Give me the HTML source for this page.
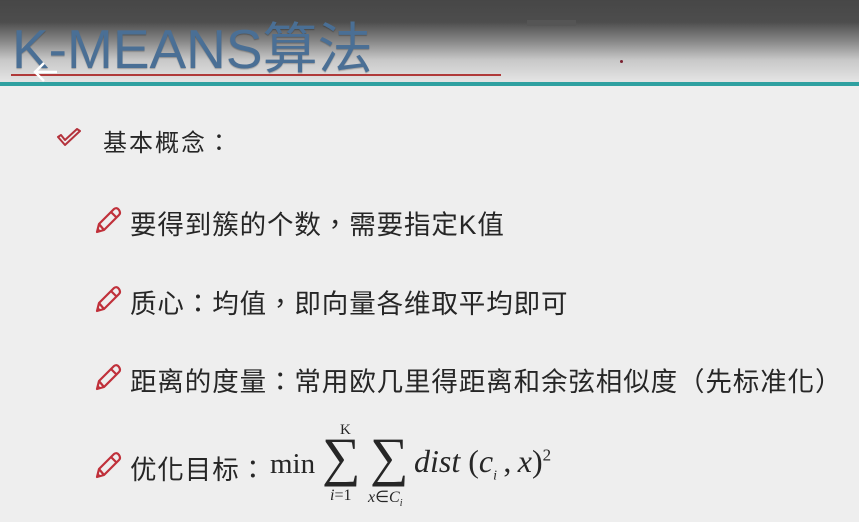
<!DOCTYPE html>
<html><head><meta charset="utf-8"><style>
html,body{margin:0;padding:0}
body{width:859px;height:522px;overflow:hidden;position:relative;background:#eeeeee;font-family:"Liberation Sans","Noto Sans CJK TC",sans-serif;color:#2a2a2a}
.top{position:absolute;left:0;top:0;width:859px;height:82px;background:linear-gradient(#474747 0px,#4d4d4d 22px,#8a8a8a 42px,#c8c8c8 60px,#e2e2e2 80px)}
.title{position:absolute;left:12px;top:4px;font-size:55px;color:#4a6f95;font-family:"Liberation Sans","Noto Sans CJK SC",sans-serif;white-space:nowrap;text-shadow:0 1px 1px rgba(0,0,0,.25)}
.red{position:absolute;left:11px;top:74px;width:490px;height:2px;background:#b03a3a}
.teal{position:absolute;left:0;top:82px;width:859px;height:4px;background:#2fa0a0}
.dash{position:absolute;left:527px;top:20px;width:49px;height:6px;background:#555}
.dot{position:absolute;left:620px;top:60px;width:3px;height:3px;border-radius:2px;background:#7a2030}
.t{position:absolute;white-space:nowrap;font-size:26.5px;letter-spacing:0.9px;font-family:"Liberation Sans","Noto Sans CJK TC",sans-serif;color:#262626}
.ic{position:absolute}
.m{font-family:"Liberation Serif",serif}
</style></head><body>
<div class="top"></div>
<div class="title">K-MEANS算法</div>
<div class="dash"></div>
<div class="dot"></div>
<div class="red"></div>
<div class="teal"></div>
<svg class="ic" style="left:30px;top:60px" width="30" height="26" viewBox="0 0 30 26"><path d="M27 12H6M14 3L5 12L14 21" stroke="#fff" stroke-width="2.5" fill="none"/></svg>

<svg class="ic" style="left:56px;top:128px" width="26" height="20" viewBox="0 0 26 20"><path d="M2 9L9 17L24 3L21 1L9 12L5 7Z" fill="none" stroke="#b4323c" stroke-width="2" stroke-linejoin="round"/></svg>
<div class="t" style="left:103px;top:123px;font-size:24px;letter-spacing:2px">基本概念：</div>

<svg class="ic" style="left:93px;top:205px;" width="30" height="30" viewBox="0 0 30 30"><g fill="none" stroke="#c0303a" stroke-width="2.2" stroke-linejoin="round"><path d="M4 27L6 19L21 4Q24 2 26 5Q28 8 26 10L11 25Z"/><path d="M6 19L11 25M18 7L23 12"/></g><path d="M4 27L5 23L8 26Z" fill="#c0303a"/></svg>
<div class="t" style="left:130px;top:203px">要得到簇的个数，需要指定K值</div>

<svg class="ic" style="left:93px;top:284px;" width="30" height="30" viewBox="0 0 30 30"><g fill="none" stroke="#c0303a" stroke-width="2.2" stroke-linejoin="round"><path d="M4 27L6 19L21 4Q24 2 26 5Q28 8 26 10L11 25Z"/><path d="M6 19L11 25M18 7L23 12"/></g><path d="M4 27L5 23L8 26Z" fill="#c0303a"/></svg>
<div class="t" style="left:130px;top:282px">质心：均值，即向量各维取平均即可</div>

<svg class="ic" style="left:93px;top:362px;" width="30" height="30" viewBox="0 0 30 30"><g fill="none" stroke="#c0303a" stroke-width="2.2" stroke-linejoin="round"><path d="M4 27L6 19L21 4Q24 2 26 5Q28 8 26 10L11 25Z"/><path d="M6 19L11 25M18 7L23 12"/></g><path d="M4 27L5 23L8 26Z" fill="#c0303a"/></svg>
<div class="t" style="left:130px;top:360px">距离的度量：常用欧几里得距离和余弦相似度（先标准化）</div>

<svg class="ic" style="left:93px;top:450px;" width="30" height="30" viewBox="0 0 30 30"><g fill="none" stroke="#c0303a" stroke-width="2.2" stroke-linejoin="round"><path d="M4 27L6 19L21 4Q24 2 26 5Q28 8 26 10L11 25Z"/><path d="M6 19L11 25M18 7L23 12"/></g><path d="M4 27L5 23L8 26Z" fill="#c0303a"/></svg>
<div class="t" style="left:130px;top:448px">优化目标：</div>

<div class="t m" style="left:270px;top:448px;font-size:29px;letter-spacing:0">min</div>
<div class="t m" style="left:322px;top:430px;font-size:54px;letter-spacing:0;line-height:54px">∑</div>
<div class="t m" style="left:340px;top:422px;font-size:15px;letter-spacing:0">K</div>
<div class="t m" style="left:330px;top:487px;font-size:16px;letter-spacing:0"><i>i</i>=1</div>
<div class="t m" style="left:370px;top:430px;font-size:54px;letter-spacing:0;line-height:54px">∑</div>
<div class="t m" style="left:368px;top:487px;font-size:16px;letter-spacing:0"><i>x</i>∈<i>C<sub style="font-size:10px">i</sub></i></div>
<div class="t m" style="left:414px;top:443px;font-size:32px;letter-spacing:0"><i>dist</i>&nbsp;(<i>c<sub style="font-size:14px">i</sub></i>&thinsp;,&thinsp;<i>x</i>)<sup style="font-size:17px">2</sup></div>
</body></html>
